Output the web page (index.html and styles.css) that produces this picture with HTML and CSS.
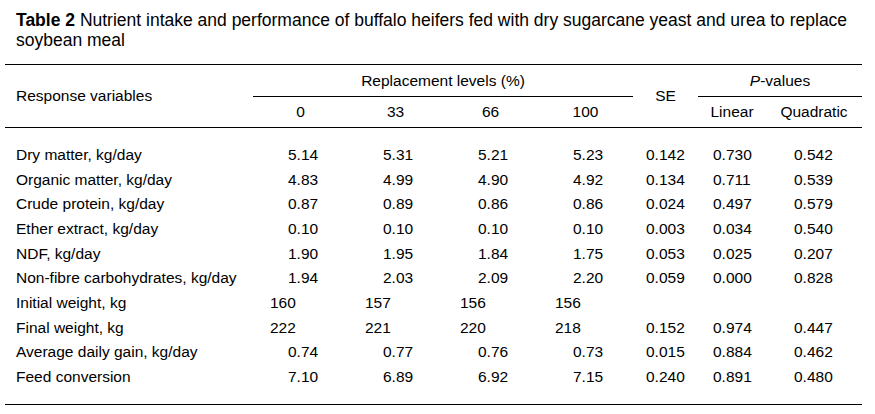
FILE: index.html
```html
<!DOCTYPE html>
<html lang="en">
<head>
<meta charset="utf-8">
<title>Table 2</title>
<link rel="stylesheet" href="styles.css">
</head>
<body>
<div class="page">
  <p class="caption"><b>Table 2</b> Nutrient intake and performance of buffalo heifers fed with dry sugarcane yeast and urea to replace soybean meal</p>
  <table class="data">
    <colgroup>
      <col class="c-var"><col class="c-lvl"><col class="c-lvl"><col class="c-lvl"><col class="c-lvl"><col class="c-se"><col class="c-lin"><col class="c-quad">
    </colgroup>
    <thead>
      <tr class="h1">
        <th rowspan="2" class="var">Response variables</th>
        <th colspan="4" class="group">Replacement levels (%)</th>
        <th rowspan="2" class="se">SE</th>
        <th colspan="2" class="group"><i>P</i>-values</th>
      </tr>
      <tr class="h2">
        <th>0</th><th>33</th><th>66</th><th>100</th><th>Linear</th><th>Quadratic</th>
      </tr>
    </thead>
    <tbody>
      <tr><td class="var">Dry matter, kg/day</td><td class="d">5.14</td><td class="d">5.31</td><td class="d">5.21</td><td class="d">5.23</td><td class="se">0.142</td><td class="lin">0.730</td><td class="quad">0.542</td></tr>
      <tr><td class="var">Organic matter, kg/day</td><td class="d">4.83</td><td class="d">4.99</td><td class="d">4.90</td><td class="d">4.92</td><td class="se">0.134</td><td class="lin">0.711</td><td class="quad">0.539</td></tr>
      <tr><td class="var">Crude protein, kg/day</td><td class="d">0.87</td><td class="d">0.89</td><td class="d">0.86</td><td class="d">0.86</td><td class="se">0.024</td><td class="lin">0.497</td><td class="quad">0.579</td></tr>
      <tr><td class="var">Ether extract, kg/day</td><td class="d">0.10</td><td class="d">0.10</td><td class="d">0.10</td><td class="d">0.10</td><td class="se">0.003</td><td class="lin">0.034</td><td class="quad">0.540</td></tr>
      <tr><td class="var">NDF, kg/day</td><td class="d">1.90</td><td class="d">1.95</td><td class="d">1.84</td><td class="d">1.75</td><td class="se">0.053</td><td class="lin">0.025</td><td class="quad">0.207</td></tr>
      <tr><td class="var">Non-fibre carbohydrates, kg/day</td><td class="d">1.94</td><td class="d">2.03</td><td class="d">2.09</td><td class="d">2.20</td><td class="se">0.059</td><td class="lin">0.000</td><td class="quad">0.828</td></tr>
      <tr><td class="var">Initial weight, kg</td><td class="i">160</td><td class="i">157</td><td class="i">156</td><td class="i">156</td><td class="se"></td><td class="lin"></td><td class="quad"></td></tr>
      <tr><td class="var">Final weight, kg</td><td class="i">222</td><td class="i">221</td><td class="i">220</td><td class="i">218</td><td class="se">0.152</td><td class="lin">0.974</td><td class="quad">0.447</td></tr>
      <tr><td class="var">Average daily gain, kg/day</td><td class="d">0.74</td><td class="d">0.77</td><td class="d">0.76</td><td class="d">0.73</td><td class="se">0.015</td><td class="lin">0.884</td><td class="quad">0.462</td></tr>
      <tr><td class="var">Feed conversion</td><td class="d">7.10</td><td class="d">6.89</td><td class="d">6.92</td><td class="d">7.15</td><td class="se">0.240</td><td class="lin">0.891</td><td class="quad">0.480</td></tr>
    </tbody>
  </table>
</div>
</body>
</html>
```

FILE: styles.css
```css
html, body {
  margin: 0;
  padding: 0;
  background: #ffffff;
}

body {
  font-family: "Liberation Sans", Arial, sans-serif;
  color: #000000;
}

.page {
  width: 875px;
  padding: 10px 0 0 5px;
  box-sizing: border-box;
}

.caption {
  margin: 0 0 14px 0;
  padding-left: 11px;
  width: 846px;
  font-size: 17.5px;
  line-height: 20px;
}

.caption b {
  font-weight: bold;
}

.data {
  width: 857px;
  table-layout: fixed;
  border-collapse: separate;
  border-spacing: 0;
  font-size: 15.5px;
}

.c-var { width: 248px; }
.c-lvl { width: 95px; }
.c-se { width: 65px; }
.c-lin { width: 68px; }
.c-quad { width: 96px; }

.data th {
  font-weight: normal;
  text-align: center;
  vertical-align: middle;
  padding: 0;
  line-height: 18px;
}

.h1 th {
  border-top: 1px solid #000;
  height: 31px;
}

.h1 th.group {
  border-bottom: 1px solid #000;
}

.h2 th {
  height: 30px;
  border-bottom: 1px solid #000;
}

.data th.var {
  text-align: left;
  padding-left: 11px;
  border-bottom: 1px solid #000;
}

.data th.se {
  border-bottom: 1px solid #000;
}

.data td {
  padding: 0;
  line-height: 24.67px;
  height: 24.67px;
  text-align: left;
  white-space: nowrap;
  vertical-align: middle;
}

.data td.var { padding-left: 11px; }
.data td.d { padding-left: 35px; }
.data td.i { padding-left: 17px; }
.data td.se { padding-left: 13px; }
.data td.lin { padding-left: 15px; }
.data td.quad { padding-left: 28px; }

.data tbody tr:first-child td {
  padding-top: 15px;
}

.data tbody tr:last-child td {
  padding-bottom: 14.5px;
  border-bottom: 1px solid #000;
}
```
